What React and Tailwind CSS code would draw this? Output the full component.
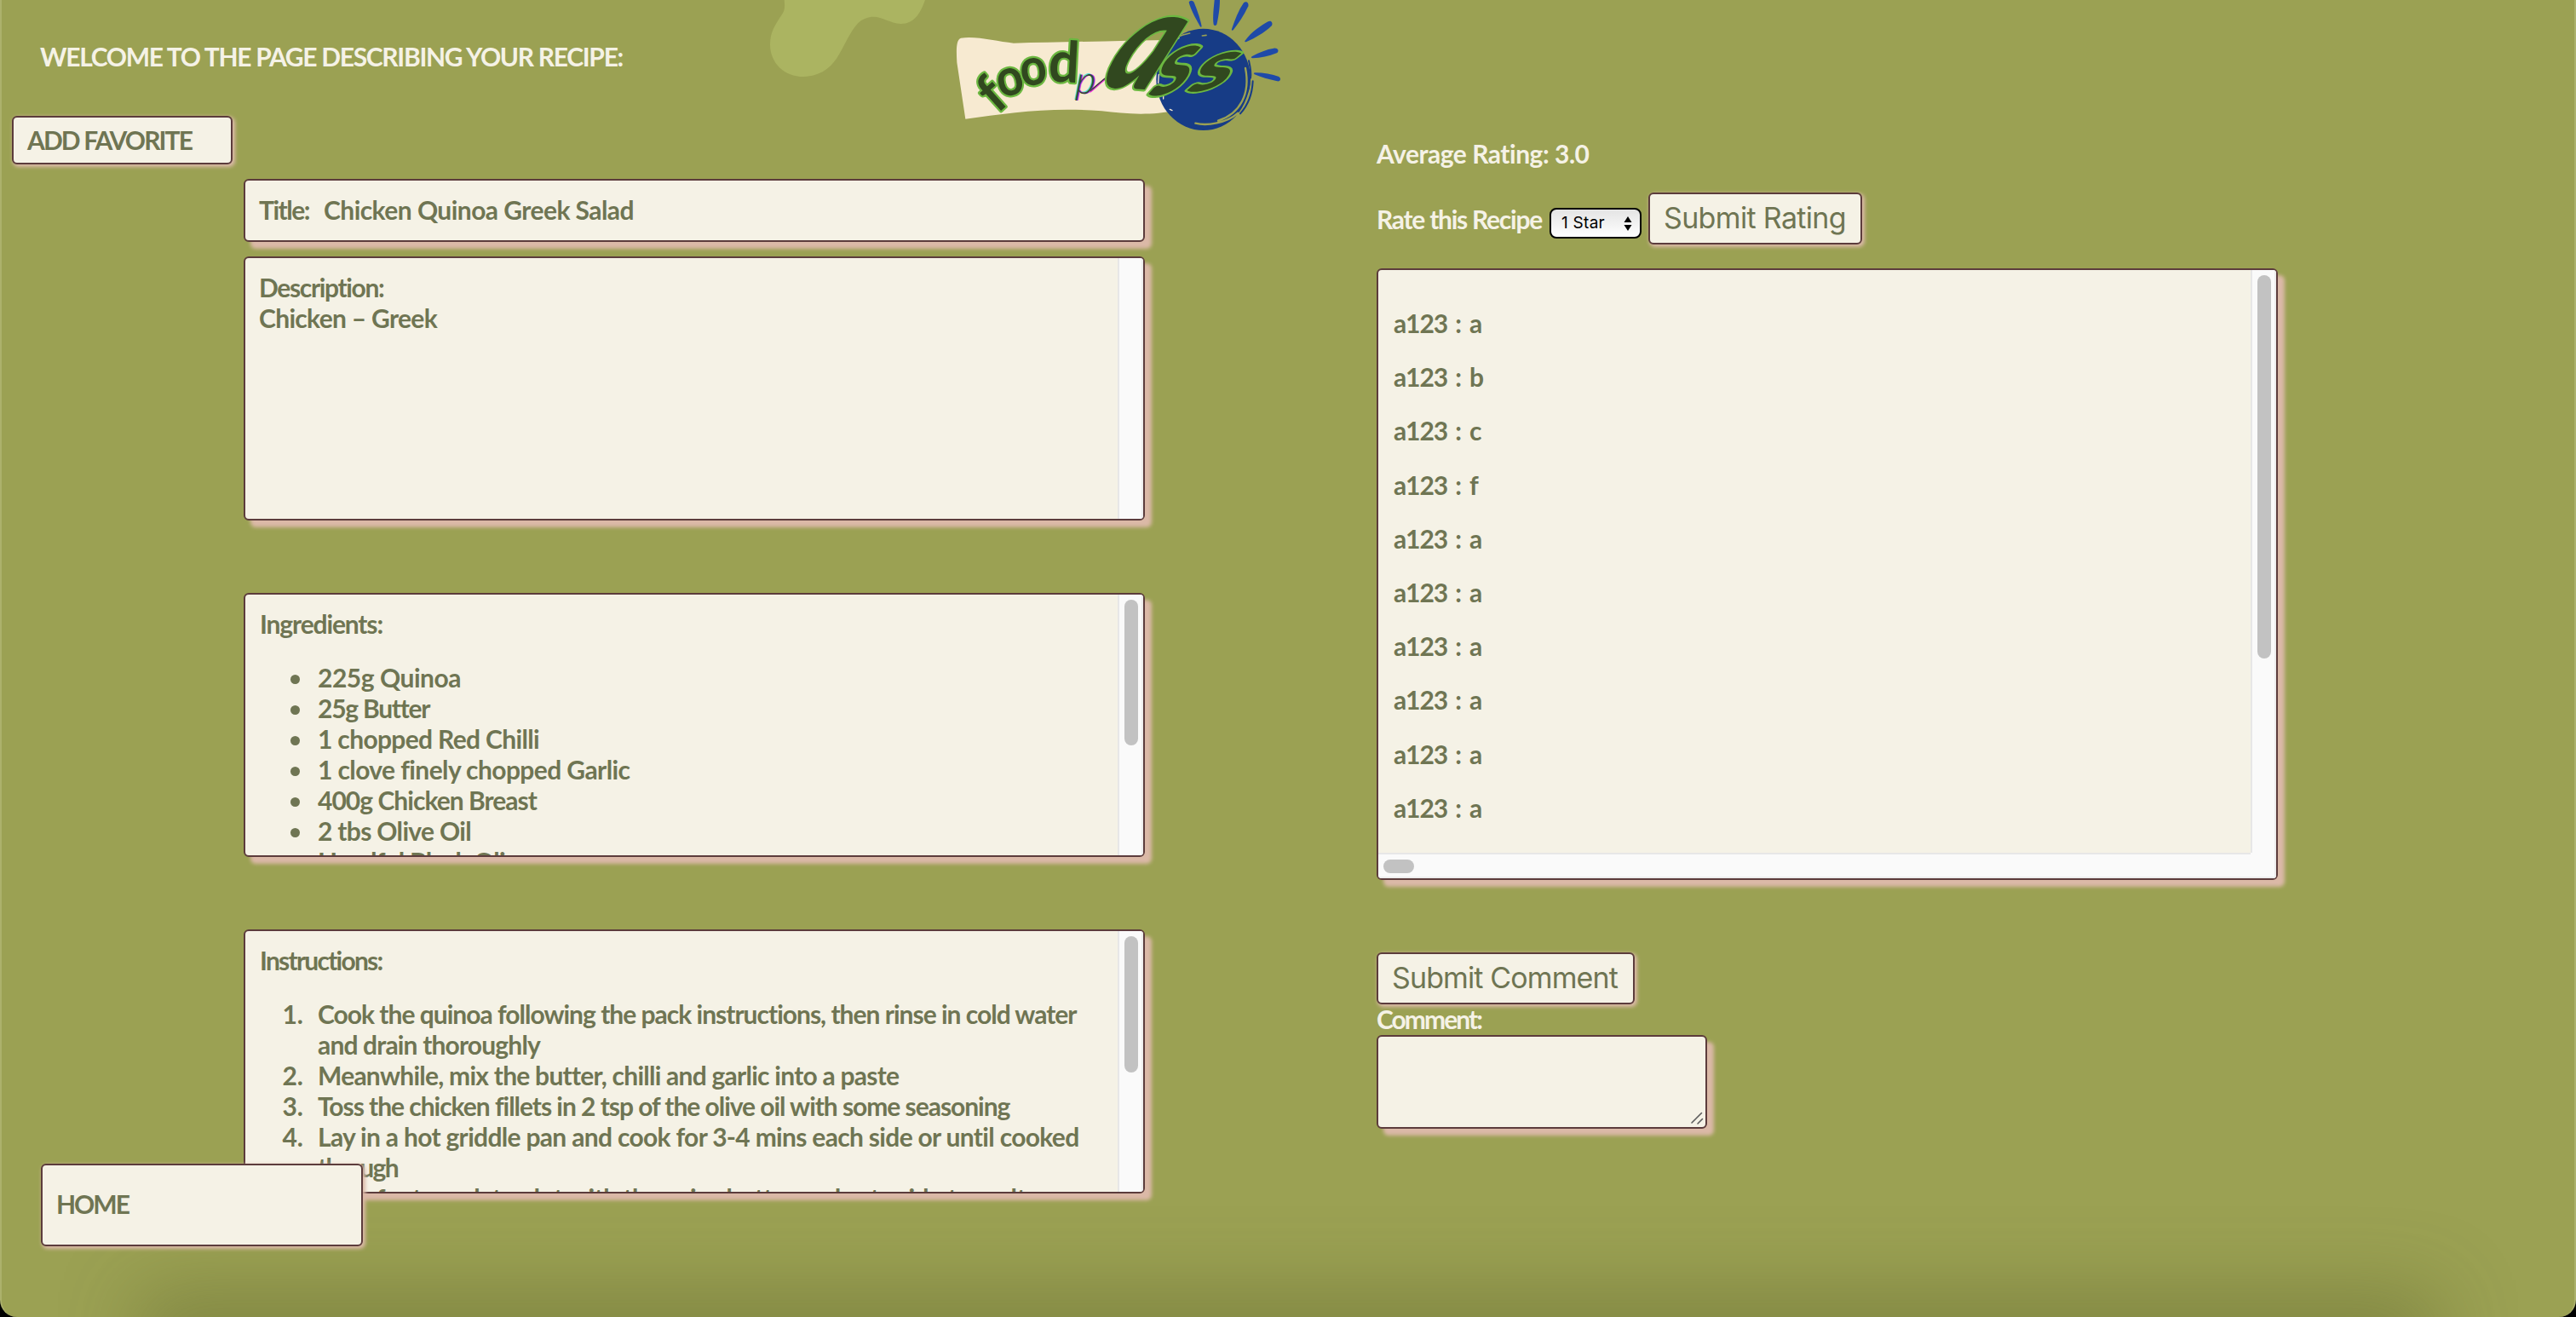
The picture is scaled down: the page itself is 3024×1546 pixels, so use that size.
import { useLayoutEffect, useRef, useState } from "react";

/* A run of text whose tracking is adjusted so that it spans the given width. */
function Fit({ w, children, className = "" }) {
  const ref = useRef(null);
  const [spacing, setSpacing] = useState(0);
  useLayoutEffect(() => {
    const natural = ref.current.getBoundingClientRect().width;
    setSpacing((w - natural) / children.length);
  }, [w, children]);
  return (
    <span
      ref={ref}
      className={`inline-block whitespace-pre ${className}`}
      style={{ letterSpacing: spacing }}
    >
      {children}
    </span>
  );
}

const deepShadow = "shadow-[8px_8px_4px_#dbb9a7]";
const softShadow = "shadow-[2px_2px_4px_1px_#dbb9a7]";
const card = "border-2 border-[#5c3c3c] rounded-md bg-[#f5f2e6]";

function VTrack({ thumb = "" }) {
  return (
    <div className="w-[30px] shrink-0 border-l-2 border-r-2 border-l-[#e7e7e7] border-r-[#ededed] bg-[#fafafa] pt-1.5 pl-1.5">
      {thumb && <div className={`w-4 rounded-full bg-[#c2c2c2] ${thumb}`} />}
    </div>
  );
}

function Panel({ className, children, thumb }) {
  return (
    <section className={`flex w-[1058px] overflow-hidden ${card} ${deepShadow} ${className}`}>
      <div className="flex-1 overflow-hidden pl-[18px]">{children}</div>
      <VTrack thumb={thumb} />
    </section>
  );
}

const ingredients = [
  ["225g Quinoa", 168],
  ["25g Butter", 130],
  ["1 chopped Red Chilli", 260],
  ["1 clove finely chopped Garlic", 366],
  ["400g Chicken Breast", 257],
  ["2 tbs Olive Oil", 180],
  ["Handful Black Olives", 262],
];

const steps = [
  [
    ["Cook the quinoa following the pack instructions, then rinse in cold water", 891],
    ["and drain thoroughly", 261],
  ],
  [["Meanwhile, mix the butter, chilli and garlic into a paste", 681]],
  [["Toss the chicken fillets in 2 tsp of the olive oil with some seasoning", 812]],
  [
    ["Lay in a hot griddle pan and cook for 3-4 mins each side or until cooked", 894],
    ["through", 94],
  ],
  [["Transfer to a plate, dot with the spicy butter and set aside to melt", 830]],
];

const comments = ["a", "b", "c", "f", "a", "a", "a", "a", "a", "a", "a"];

function Blob() {
  return (
    <svg className="h-[110px] w-60 shrink-0" viewBox="0 0 720 330">
      <path
        fill="#abb461"
        d="M122 0C125 28 123 38 112 54C90 88 72 112 72 158C73 222 122 270 190 270C250 268 288 240 316 190C346 138 360 98 392 73C450 38 480 82 532 84C580 84 602 46 618 0Z"
      />
    </svg>
  );
}

function Logo() {
  return (
    <svg className="h-[170px] w-[420px] shrink-0" viewBox="0 0 1260 510">
      <path
        fill="#f7ead1"
        d="M100 419L70 220C68 180 66 140 84 134C140 126 210 146 270 152C440 148 640 144 850 140L850 388C740 410 660 400 580 391C400 376 250 398 100 419Z"
      />
      <ellipse cx="938" cy="280" rx="166" ry="179" fill="#173c86" />
      <g fill="none" strokeLinecap="round">
        <path stroke="#f7ead1" strokeWidth="4" d="M784 190C800 160 820 145 852 134M781 262L779 292M797 338V348M820 385L828 389" />
        <path stroke="#9ba153" strokeWidth="5" d="M808 158C830 135 860 122 890 117M934 126L948 124" />
        <path stroke="#9ba153" strokeWidth="7" d="M1086 240C1104 330 1068 400 990 425M910 434C950 444 1020 434 1060 398M1110 290C1092 365 1068 410 1018 446" />
        <path stroke="#173c86" strokeWidth="6" d="M1112 286C1110 330 1095 370 1068 400M1104 275C1106 264 1104 240 1098 214" />
      </g>
      <g fill="#1f4aa8">
        <path d="M887 8C890 0 901 0 905 8C918 40 928 70 932 93Q930 98 926 92C908 60 894 34 887 8Z" />
        <path d="M977 0H996C996 30 990 66 985 86Q979 94 974 86C970 60 975 24 977 0Z" />
        <path d="M1080 10C1087 3 1099 8 1096 22C1080 56 1062 82 1043 106Q1036 110 1038 102C1050 68 1062 36 1080 10Z" />
        <path d="M1166 76C1176 70 1184 80 1179 90C1152 116 1120 134 1090 147Q1080 150 1086 142C1108 112 1138 92 1166 76Z" />
        <path d="M1186 170C1200 168 1207 180 1196 187C1168 198 1140 204 1112 205Q1102 203 1110 198C1136 184 1160 174 1186 170Z" />
        <path d="M1120 256C1150 256 1180 262 1204 270C1214 278 1208 288 1198 286C1168 280 1140 272 1118 262Q1112 257 1120 256Z" />
      </g>
      <g
        fontFamily="Lato, sans-serif"
        fontWeight="700"
        fill="#31481f"
        stroke="#6cb841"
        strokeWidth="14"
        strokeLinejoin="round"
        paintOrder="stroke"
      >
        <text transform="translate(212 402) rotate(-42) scale(.95 1)" fontSize="190">f</text>
        <text transform="translate(224 346) rotate(-15) scale(.9 1)" fontSize="182">o</text>
        <text transform="translate(298 304) rotate(-6) scale(.9 1)" fontSize="182">o</text>
        <text transform="translate(390 286) rotate(3) scale(.95 1)" fontSize="200">d</text>
      </g>
      <g fontFamily="Lato, sans-serif" fontStyle="italic" fontWeight="300" fontSize="136">
        <text transform="translate(482 328) skewX(-4)" fill="#55e0dc">p</text>
        <text transform="translate(490 330) skewX(-4)" fill="#e629d8">p</text>
        <text transform="translate(486 329) skewX(-4)" fill="#2f4a35">p</text>
      </g>
      <path d="M540 322C555 312 574 290 592 278" fill="none" stroke="#e629d8" strokeWidth="7" strokeLinecap="round" />
      <path d="M540 319C555 309 574 289 592 276" fill="none" stroke="#2f4a35" strokeWidth="4" strokeLinecap="round" />
      <g
        fontFamily="Lato, sans-serif"
        fontStyle="italic"
        fontWeight="900"
        fill="#31481f"
        stroke="#6cb841"
        strokeWidth="14"
        strokeLinejoin="round"
        paintOrder="stroke"
      >
        <text transform="translate(566 304) rotate(4) skewX(-24) scale(.76 1)" fontSize="500">a</text>
        <text transform="translate(744 346) rotate(-16) skewX(-34) scale(1.25 .9)" fontSize="290">s</text>
        <text transform="translate(880 330) rotate(-12) skewX(-34) scale(1.3 .74)" fontSize="290">s</text>
      </g>
    </svg>
  );
}

export default function App() {
  return (
    <div className="h-[1546px] w-[3024px] overflow-hidden bg-black">
      <div className="relative flex h-full flex-col overflow-hidden rounded-b-[20px] border-x-2 border-[#acb16c] bg-[#9ba153] font-['Lato',sans-serif] text-[30px] leading-9 font-bold text-[#6f7553]">
        <div className="absolute right-[190px] -bottom-10 left-[190px] h-10 shadow-[0_0_90px_30px_rgba(80,85,35,0.36)]" />

        <header className="flex h-[136px] shrink-0 items-start">
          <h1 className="w-[878px] shrink-0 pt-12 pl-[45px] text-[#f5f2e6]">
            <Fit w={684}>WELCOME TO THE PAGE DESCRIBING YOUR RECIPE:</Fit>
          </h1>
          <Blob />
          <div className="-ml-5">
            <Logo />
          </div>
        </header>

        <main className="flex">
          <div className="w-[1614px] shrink-0">
            <button className={`ml-3 block h-[57px] w-[259px] pb-0.5 pl-4 text-left ${card} ${softShadow}`}>
              <Fit w={193}>ADD FAVORITE</Fit>
            </button>

            <div className="ml-[284px] w-[1058px]">
              <section className={`mt-[17px] h-[74px] pt-4 pl-4 ${card} ${deepShadow}`}>
                <Fit w={59}>Title:</Fit>
                <Fit w={364} className="ml-[17px]">Chicken Quinoa Greek Salad</Fit>
              </section>

              <Panel className="mt-[17px] h-[310px]">
                <div className="-ml-0.5 flex flex-col items-start pt-4">
                  <Fit w={147}>Description:</Fit>
                  <Fit w={209}>Chicken – Greek</Fit>
                </div>
              </Panel>

              <Panel className="mt-[85px] h-[310px]" thumb="h-[171px]">
                <p className="-ml-px pt-4">
                  <Fit w={144}>Ingredients:</Fit>
                </p>
                <ul className="mt-[27px]">
                  {ingredients.map(([text, w]) => (
                    <li key={text} className="flex items-center pl-[35px]">
                      <span className="mt-1 mr-[21px] size-[11px] rounded-full bg-[#6f7553]" />
                      <Fit w={w}>{text}</Fit>
                    </li>
                  ))}
                </ul>
              </Panel>

              <Panel className="mt-[85px] h-[310px]" thumb="h-[160px]">
                <p className="-ml-px pt-4">
                  <Fit w={144}>Instructions:</Fit>
                </p>
                <ol className="mt-[27px]">
                  {steps.map((lines, i) => (
                    <li key={i} className="flex">
                      <span className="mr-[17px] w-[50px] text-right">{i + 1}.</span>
                      <div className="flex flex-col items-start">
                        {lines.map(([text, w]) => (
                          <Fit key={text} w={w}>{text}</Fit>
                        ))}
                      </div>
                    </li>
                  ))}
                </ol>
              </Panel>
            </div>
          </div>

          <div className="flex flex-col items-start">
            <p className="pt-[26px] text-[#f5f2e6]">
              <Fit w={250}>Average Rating: 3.0</Fit>
            </p>
            <div className="mt-[28px] flex h-[61px] items-start">
              <span className="pt-[13px] text-[#f5f2e6]">
                <Fit w={194}>Rate this Recipe</Fit>
              </span>
              <div className="mt-[18px] ml-[9px] flex h-9 w-[108px] items-center justify-between rounded-lg border-2 border-black bg-gradient-to-b from-[#e4e4e4] to-white pr-[9px] pl-3 font-['Inter',sans-serif] text-[19px] font-normal text-black">
                <Fit w={51}>1 Star</Fit>
                <svg className="h-[17px] w-[10px]" viewBox="0 0 10 17">
                  <path d="M5 0L9.5 7H.5ZM5 17L.5 10H9.5Z" />
                </svg>
              </div>
              <button className={`ml-2 h-[61px] w-[251px] pb-0.5 pl-4 text-left font-['Inter',sans-serif] text-[34px] font-normal ${card} ${softShadow}`}>
                <Fit w={214}>Submit Rating</Fit>
              </button>
            </div>

            <section className={`mt-7 flex h-[718px] w-[1058px] flex-col overflow-hidden ${card} ${deepShadow}`}>
              <div className="flex h-[684px] shrink-0">
                <div className="flex-1 overflow-hidden pt-11 pl-[18px]">
                  {comments.map((c, i) => (
                    <p key={i} className="mb-[27.2px] flex">
                      <Fit w={63}>a123</Fit>
                      <span className="mx-1 w-[18px] text-center">:</span>
                      <span>{c}</span>
                    </p>
                  ))}
                </div>
                <VTrack thumb="h-[450px]" />
              </div>
              <div className="flex h-[30px] shrink-0">
                <div className="flex-1 border-y-2 border-t-[#e7e7e7] border-b-[#ededed] bg-[#fafafa] pt-1.5 pl-1.5">
                  <div className="h-4 w-9 rounded-full bg-[#c2c2c2]" />
                </div>
                <div className="w-[30px] border-r-2 border-b-2 border-[#ededed] bg-[#fafafa]" />
              </div>
            </section>

            <button className={`mt-[85px] h-[61px] w-[303px] pb-0.5 pl-4 text-left font-['Inter',sans-serif] text-[34px] font-normal ${card} ${softShadow}`}>
              <Fit w={265}>Submit Comment</Fit>
            </button>
            <label className="-mt-px text-[#f5f2e6]">
              <Fit w={123}>Comment:</Fit>
            </label>
            <div className={`mt-px flex h-[110px] w-[388px] items-end justify-end p-0.5 ${card} ${deepShadow}`}>
              <svg className="size-4" viewBox="0 0 16 16" fill="none" stroke="#5c5c5c" strokeWidth="1.6" strokeLinecap="round">
                <path d="M2 13L13.500 1.500M9 14L14.500 8.500" />
              </svg>
            </div>
          </div>
        </main>

        <a className={`absolute top-[1366px] left-[46px] flex h-[97px] w-[378px] items-center pb-1 pl-4 ${card} ${softShadow}`}>
          <Fit w={85}>HOME</Fit>
        </a>
      </div>
    </div>
  );
}
